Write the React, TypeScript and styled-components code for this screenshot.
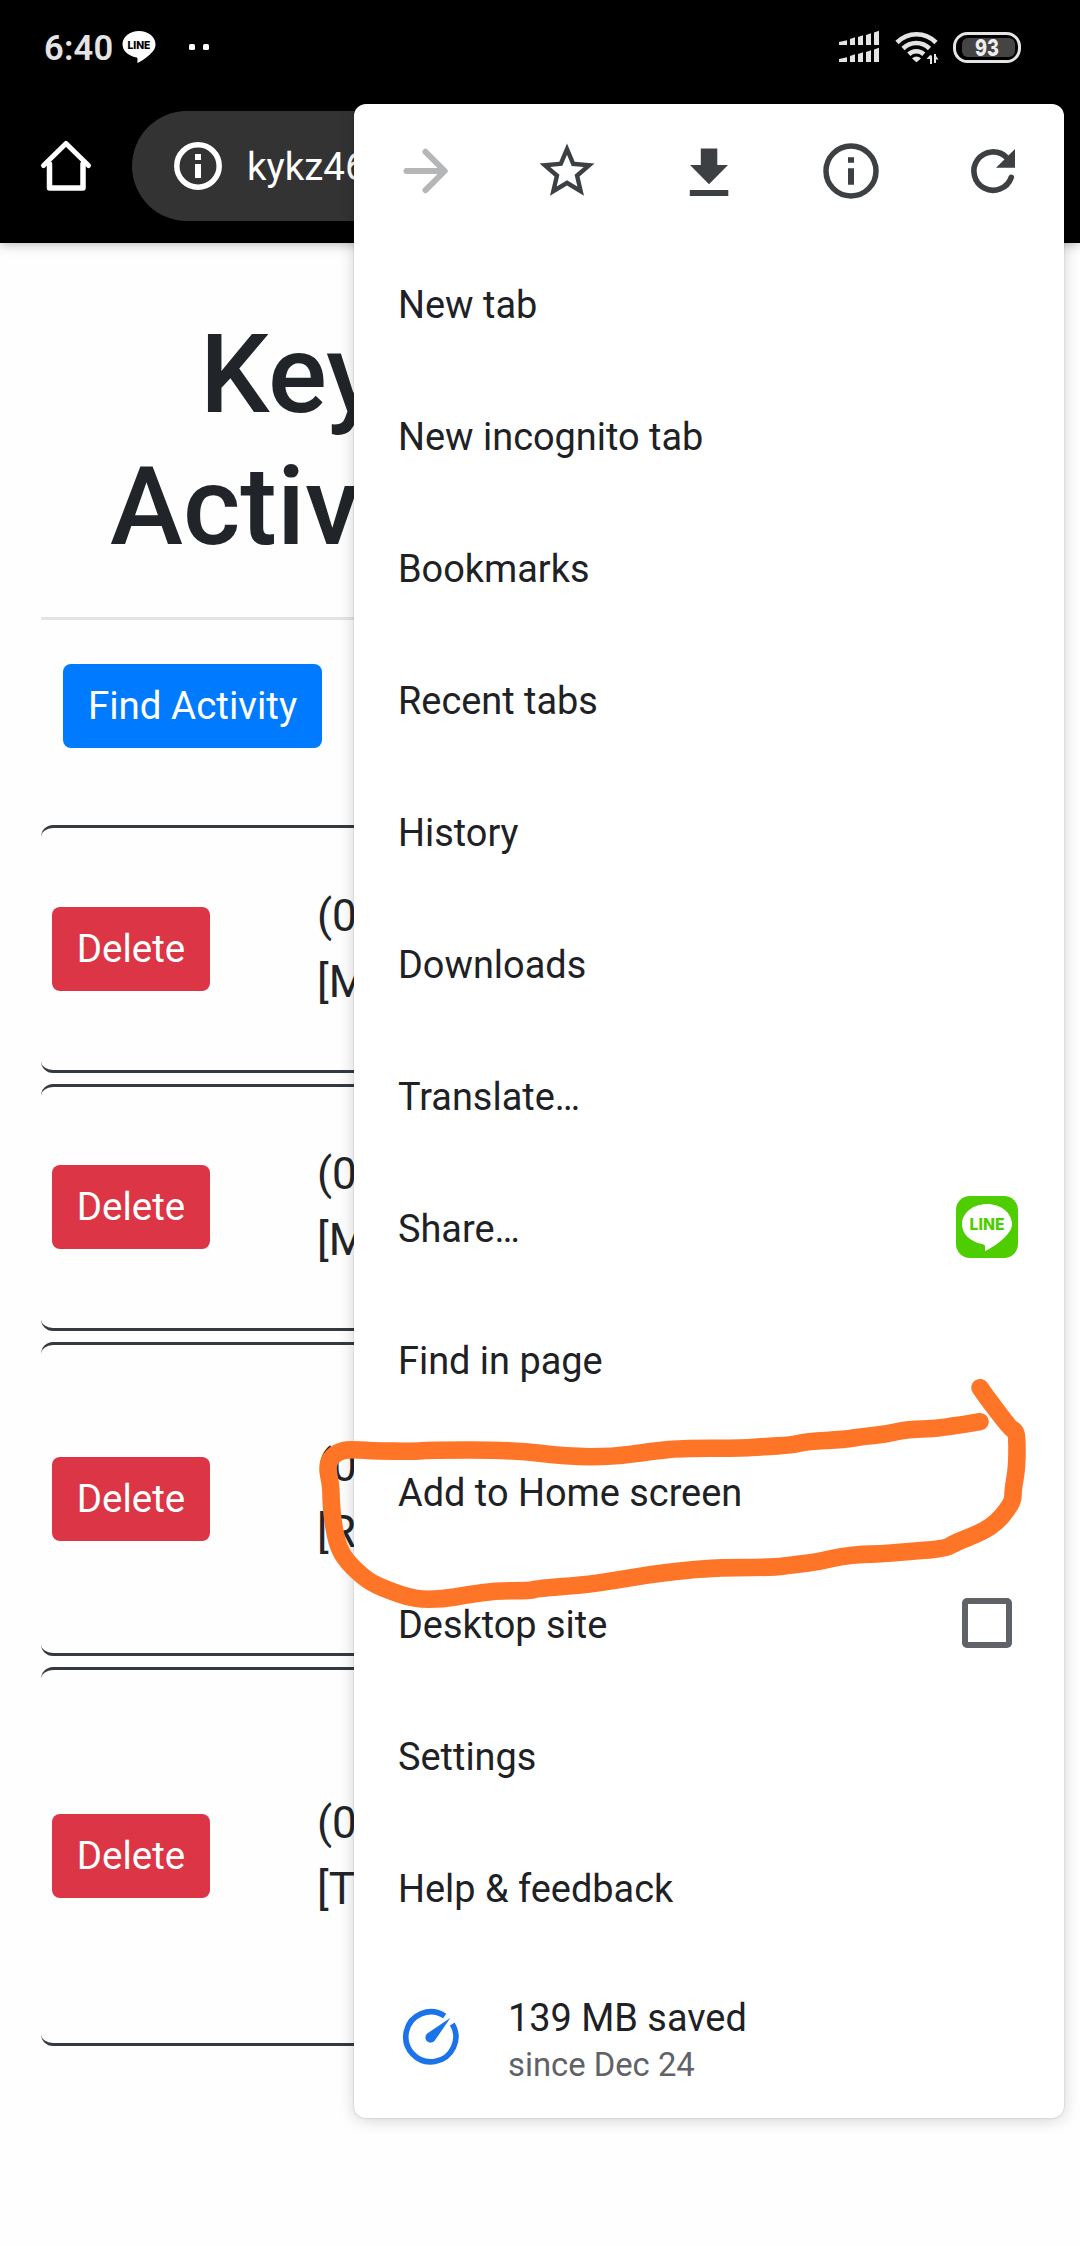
import React from "react";
import styled, { createGlobalStyle } from "styled-components";

const GlobalStyle = createGlobalStyle`
  *, *::before, *::after { box-sizing: border-box; }
  html, body { margin: 0; padding: 0; background: #fefefe; }
  body { font-family: Roboto, "Noto Sans", sans-serif; color: #212529; }
  svg { display: block; flex: none; overflow: visible; }
`;

const Screen = styled.div`
  position: relative;
  width: 1080px;
  height: 2246px;
  overflow: hidden;
  background: #fefefe;
`;

const BrowserHeader = styled.header`
  position: relative;
  height: 243px;
  background: #000;
  box-shadow: 0 0 12px rgba(0, 0, 0, 0.35);
`;

const StatusBar = styled.div`
  display: flex;
  justify-content: space-between;
  height: 93px;
  padding: 0 58px 0 44px;
`;

const StatusGroup = styled.div<{ $gap: number }>`
  display: flex;
  align-items: center;
  gap: ${(p) => p.$gap}px;
  height: 94px;
`;

const Clock = styled.span`
  width: 69px;
  padding-top: 2px;
  font-size: 34.5px;
  line-height: 40px;
  font-weight: 600;
  color: #e4e4e4;
  letter-spacing: 0.2px;
  white-space: nowrap;
`;

const Toolbar = styled.div`
  display: flex;
  align-items: center;
  height: 150px;
  padding: 0 120px 5px 33px;
  gap: 33px;
`;

const AddressBar = styled.div`
  display: flex;
  align-items: center;
  flex: 1;
  height: 110px;
  padding-left: 33px;
  border-radius: 55px;
  background: #333;
`;

const Url = styled.span`
  margin-left: 16px;
  padding-top: 2px;
  font-size: 38.5px;
  line-height: 46px;
  color: #fff;
`;

const Page = styled.main`
  padding: 66px 41px 0;
`;

const Title = styled.h1`
  margin: 0;
  padding-left: 69px;
  font-size: 110px;
  line-height: 132px;
  font-weight: 500;
`;

const TitleLine = styled.span<{ $indent?: number }>`
  display: block;
  padding-left: ${(p) => p.$indent ?? 0}px;
`;

const Rule = styled.hr`
  height: 3px;
  margin: 44px 0 44px;
  border: 0;
  background: rgba(0, 0, 0, 0.1);
`;

const Button = styled.button<{ $tone: string; $width: number }>`
  flex: none;
  width: ${(p) => p.$width}px;
  height: 84px;
  padding: 0;
  border: 0;
  border-radius: 8px;
  background: ${(p) => p.$tone};
  color: #fff;
  font: 400 38.5px/58px Roboto, "Noto Sans", sans-serif;
  white-space: nowrap;
`;

const Actions = styled.div`
  display: flex;
  height: 161px;
  padding-left: 22px;
`;

const ActivityList = styled.div`
  display: flex;
  flex-direction: column;
  gap: 11px;
`;

const ActivityCard = styled.article<{ $height: number }>`
  display: flex;
  align-items: center;
  gap: 107px;
  height: ${(p) => p.$height}px;
  padding: 0 0 1px 11px;
  border: solid #343a40;
  border-width: 3px 0;
  border-radius: 12px;
`;

const ActivityText = styled.div`
  font-size: 44px;
  line-height: 66px;
`;

const Menu = styled.nav`
  position: absolute;
  top: 104px;
  left: 354px;
  width: 710px;
  height: 2014px;
  border-radius: 12px;
  background: #fff;
  box-shadow: 0 0 2px rgba(0, 0, 0, 0.2), 0 2px 16px rgba(0, 0, 0, 0.18);
`;

const MenuIcons = styled.div`
  display: grid;
  grid-template-columns: repeat(5, 1fr);
  justify-items: center;
  align-items: center;
  height: 135px;
  padding-bottom: 2px;
`;

const MenuIcon = styled.svg.attrs({ width: 66, height: 66, viewBox: "0 0 66 66" })<{ $faded?: boolean }>`
  color: ${(p) => (p.$faded ? "#b5b6b8" : "#3c4043")};
`;

const MenuItem = styled.div`
  display: flex;
  align-items: center;
  justify-content: space-between;
  height: 132px;
  padding: 0 46px 0 44px;
  font-size: 37.9px;
  line-height: 46px;
  color: #202124;
`;

const Checkbox = styled.span`
  width: 50px;
  height: 50px;
  margin: 0 6px 4px 0;
  border: 6px solid #5f6368;
  border-radius: 5px;
`;

const Savings = styled.div`
  display: flex;
  align-items: center;
  gap: 44px;
  height: 163px;
  padding: 1px 0 0 44px;
`;

const SavingsText = styled.div`
  display: flex;
  flex-direction: column;
  padding-top: 7px;
  font-size: 37.9px;
  line-height: 48px;
  color: #202124;
`;

const SavingsNote = styled.span`
  font-size: 32.8px;
  line-height: 46px;
  color: #5f6368;
`;

const Scribble = styled.svg`
  position: absolute;
  top: 0;
  left: 0;
  pointer-events: none;
`;

const LogoText = styled.text`
  font-family: Inter, Roboto, sans-serif;
  font-weight: 800;
`;

function ChatBubble() {
  return (
    <svg width="34" height="34" viewBox="0 0 34 34">
      <path d="M17 1C8 1 .5 6.700 .5 14.300c0 6.300 5.300 11.300 13 12.900 2 .4 2.200 1 2 2.600l-.2 2.200c0 1 .4 1 1.200.5C22 29.600 27 26 30.500 21.800c2-2.300 3-4.700 3-7.500C33.500 6.700 26 1 17 1z" fill="#fff" />
      <LogoText x="5.400" y="19.300" fontSize="10.800" textLength="23" lengthAdjust="spacingAndGlyphs" fill="#000">LINE</LogoText>
    </svg>
  );
}

const bars = [0, 11, 19, 27, 35];

function SignalIcon() {
  return (
    <svg width="41" height="32" viewBox="0 0 41 32" fill="#e4e4e4">
      {[14, 31].map((base) =>
        bars.map((x, i) => {
          const w = i === 0 ? 8 : 5;
          const h = [4, 7, 9, 11, 13.500][i];
          return <path key={`${base}-${x}`} d={`M${x} ${base}v${-h + 1}l${w} -1.800v${h + 0.8}z`} />;
        }),
      )}
    </svg>
  );
}

function WifiIcon() {
  return (
    <svg width="43" height="33" viewBox="0 0 43 33" fill="none" stroke="#e4e4e4" strokeWidth="4.600">
      <path d="M2 11.500C13 .5 30 .5 41 11.500" />
      <path d="M8 17.500c7.500-7.300 19-7.300 26.500 0" />
      <path d="M13.800 23.300c4.300-4 10.700-4 15 0" />
      <path d="M17 27.500c2.500-2.700 6.500-2.700 9 0l-4.500 3.700z" fill="#e4e4e4" stroke="none" />
      <path d="M36 33V24.500M40 23v9" strokeWidth="2" />
      <path d="M31.500 28l4-4.500v4.500zM39.500 28.500h4L39.500 23z" fill="#e4e4e4" stroke="none" />
    </svg>
  );
}

function BatteryIcon() {
  return (
    <svg width="69" height="31" viewBox="0 0 69 31">
      <rect x="1.500" y="1.500" width="65" height="28" rx="13" fill="none" stroke="#e4e4e4" strokeWidth="3" />
      <rect x="9" y="6" width="53" height="19" rx="6" fill="#444" />
      <LogoText x="34" y="24" textAnchor="middle" fontSize="23.500" textLength="24" lengthAdjust="spacingAndGlyphs" fill="#eee">93</LogoText>
    </svg>
  );
}

const AppBadge = styled.svg`
  margin-bottom: 4px;
`;

function LineAppIcon() {
  return (
    <AppBadge width="62" height="62" viewBox="0 0 62 62">
      <rect width="62" height="62" rx="14" fill="#4ecd00" />
      <path d="M31 8C17.300 8 6 16.800 6 28c0 10 8.300 17.800 20 20 2.300.5 3 1 3 2.500V55c4-1.500 14-7.500 21-15 4-4.300 6-8 6-12C56 16.800 44.700 8 31 8z" fill="#fff" />
      <LogoText x="13.500" y="34" fontSize="15.500" textLength="35" lengthAdjust="spacingAndGlyphs" fill="#4ecd00">LINE</LogoText>
    </AppBadge>
  );
}

const strokePoints: [number, number][] = [
  [980, 1421.7], [938, 1429], [908, 1429], [885, 1434.5], [862, 1436.5], [845, 1439.5], [807, 1441.5],
  [792, 1445], [763, 1446.700], [740, 1448.300], [680, 1448.300], [650, 1451.500], [613, 1456.700],
  [567, 1456.700], [513, 1450], [427, 1450], [417, 1451.300], [372, 1451], [360, 1449.700], [343, 1449.700],
  [332, 1456], [327, 1466.700], [331, 1486.700], [331, 1500], [333, 1523], [338, 1546.700], [347, 1561.700],
  [367, 1580.700], [387, 1590], [415, 1599.300], [443, 1599.300], [467, 1594.700], [497, 1590.700],
  [530, 1590.700], [537, 1588.700], [583, 1585], [610, 1581.300], [647, 1575], [683, 1570.700], [713, 1568],
  [730, 1567.700], [775, 1567.300], [793, 1564.700], [820, 1561.700], [842, 1556], [863, 1554.300],
  [880, 1554], [903, 1552], [945, 1548.700], [955, 1542.700], [983, 1531.700], [997, 1522], [1007, 1510],
  [1013, 1500], [1013, 1490], [1017, 1466.700], [1017, 1436.700], [1015, 1430.700], [1010, 1428],
  [988, 1399], [980, 1387.700],
];

// Runs a curve through the midpoint of each pair of points to soften the corners.
function smoothPath(points: [number, number][]) {
  let d = `M${points[0][0]} ${points[0][1]}`;
  for (let i = 1; i < points.length - 1; i++) {
    const [x, y] = points[i];
    const [nx, ny] = points[i + 1];
    d += `Q${x} ${y} ${(x + nx) / 2} ${(y + ny) / 2}`;
  }
  const last = points[points.length - 1];
  return `${d}L${last[0]} ${last[1]}`;
}

const activities = [
  { height: 248, lines: ["(0", "[M"] },
  { height: 247, lines: ["(0", "[M"] },
  { height: 314, lines: ["(0", "[R"] },
  { height: 379, lines: ["(0", "[T"] },
];

const menuItems: { label: string; extra?: React.ReactNode }[] = [
  { label: "New tab" },
  { label: "New incognito tab" },
  { label: "Bookmarks" },
  { label: "Recent tabs" },
  { label: "History" },
  { label: "Downloads" },
  { label: "Translate…" },
  { label: "Share…", extra: <LineAppIcon /> },
  { label: "Find in page" },
  { label: "Add to Home screen" },
  { label: "Desktop site", extra: <Checkbox /> },
  { label: "Settings" },
  { label: "Help & feedback" },
];

export default function App() {
  return (
    <Screen>
      <GlobalStyle />
      <BrowserHeader>
        <StatusBar>
          <StatusGroup $gap={9}>
            <Clock>6:40</Clock>
            <ChatBubble />
            <svg width="54" height="6" viewBox="0 0 54 6" fill="#fff">
              <rect x="24" width="6" height="6" rx="1.500" />
              <rect x="38" width="6" height="6" rx="1.500" />
            </svg>
          </StatusGroup>
          <StatusGroup $gap={15}>
            <SignalIcon />
            <WifiIcon />
            <BatteryIcon />
          </StatusGroup>
        </StatusBar>
        <Toolbar>
          <svg width="66" height="66" viewBox="0 0 66 66" fill="none" stroke="#fff" strokeLinejoin="round" strokeLinecap="round">
            <path d="M10.500 32.500L33 10.500l22.500 22" strokeWidth="5" />
            <path d="M16.500 31v24h33.500v-24" strokeWidth="5.500" />
          </svg>
          <AddressBar>
            <svg width="66" height="66" viewBox="0 0 66 66">
              <circle cx="33" cy="33" r="21.200" fill="none" stroke="#fff" strokeWidth="5.500" />
              <path d="M30 21h6v6h-6zM30 31h6v14h-6z" fill="#fff" />
            </svg>
            <Url>kykz46</Url>
          </AddressBar>
        </Toolbar>
      </BrowserHeader>

      <Page>
        <Title>
          <TitleLine $indent={90}>Key</TitleLine>
          <TitleLine>Activ</TitleLine>
        </Title>
        <Rule />
        <Actions>
          <Button $tone="#007bff" $width={259}>Find Activity</Button>
        </Actions>
        <ActivityList>
          {activities.map((activity, i) => (
            <ActivityCard key={i} $height={activity.height}>
              <Button $tone="#dc3545" $width={158}>Delete</Button>
              <ActivityText>
                {activity.lines.map((line) => (
                  <div key={line}>{line}</div>
                ))}
              </ActivityText>
            </ActivityCard>
          ))}
        </ActivityList>
      </Page>

      <Menu>
        <MenuIcons>
          <MenuIcon $faded>
            <path d="M14.500 33H52M33.500 13.800L52.700 33 33.500 52.200" fill="none" stroke="currentColor" strokeWidth="6" strokeLinecap="round" strokeLinejoin="round" />
          </MenuIcon>
          <MenuIcon>
            <path transform="scale(2.750)" fill="currentColor" d="M22 9.240l-7.190-.62L12 2 9.190 8.630 2 9.240l5.460 4.730L5.820 21 12 17.270 18.180 21l-1.630-7.030L22 9.240zM12 15.400l-3.760 2.270 1-4.280-3.320-2.880 4.380-.38L12 6.100l1.710 4.040 4.380.38-3.320 2.880 1 4.280L12 15.400z" />
          </MenuIcon>
          <MenuIcon>
            <path d="M24.800 10.500h16.500v16.500h10.700L33 46.200 14 27h10.800zM13.800 52h38.500v6H13.800z" fill="currentColor" />
          </MenuIcon>
          <MenuIcon>
            <circle cx="33" cy="33" r="25" fill="none" stroke="currentColor" strokeWidth="5.500" />
            <path d="M30 19.200h6v5.500h-6zM30 30.200h6v16.500h-6z" fill="currentColor" />
          </MenuIcon>
          <MenuIcon>
            <path d="M51.200 39.500A19.200 19.200 0 1 1 46.600 19.400" fill="none" stroke="currentColor" strokeWidth="5.600" strokeLinecap="round" />
            <path d="M55 11v18.700H36z" fill="currentColor" />
          </MenuIcon>
        </MenuIcons>
        {menuItems.map((item) => (
          <MenuItem key={item.label}>
            <span>{item.label}</span>
            {item.extra}
          </MenuItem>
        ))}
        <Savings>
          <svg width="66" height="66" viewBox="0 0 66 66">
            <path d="M46.700 12A25 25 0 1 0 54.300 20" fill="none" stroke="#1a73e8" strokeWidth="5.600" />
            <path d="M52.500 13.800L36.800 36.500a5.200 5.200 0 1 1-7.600-7z" fill="#1a73e8" />
          </svg>
          <SavingsText>
            <span>139 MB saved</span>
            <SavingsNote>since Dec 24</SavingsNote>
          </SavingsText>
        </Savings>
      </Menu>

      <Scribble width="1080" height="2246" viewBox="0 0 1080 2246">
        <path d={smoothPath(strokePoints)} fill="none" stroke="#ff7527" strokeWidth="17.600" strokeLinecap="round" strokeLinejoin="round" />
      </Scribble>
    </Screen>
  );
}
